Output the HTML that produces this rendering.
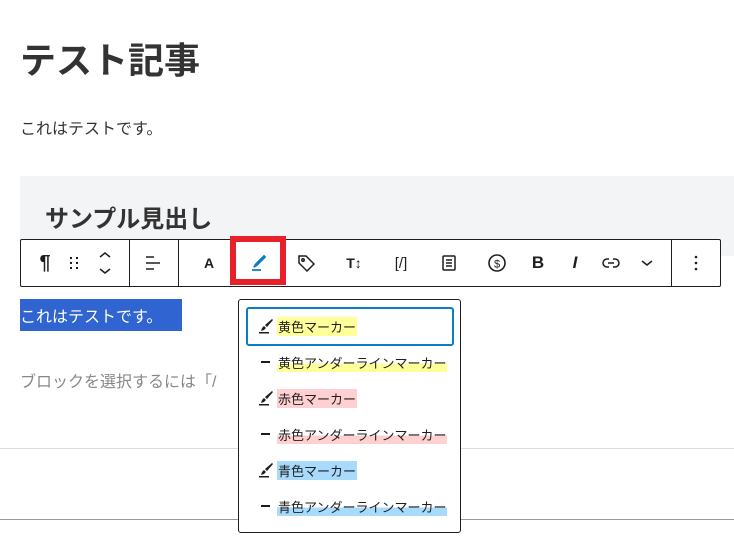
<!DOCTYPE html>
<html><head><meta charset="utf-8"><style>
*{margin:0;padding:0;box-sizing:border-box}
body{width:734px;height:545px;overflow:hidden;background:#fff;position:relative;font-family:"Liberation Sans","Noto Sans CJK JP",sans-serif;color:#1e1e1e}
.a{position:absolute;white-space:nowrap}
.ic{position:absolute;top:239px;height:48px;display:flex;align-items:center;justify-content:center;transform:translateX(-50%)}
.it{position:absolute;left:7px;width:208px;height:36px;display:flex;align-items:center;font-size:13px;color:#1e1e1e}
.it .m{position:absolute;left:12px;top:10px}
.it .t{position:absolute;left:31px;padding:0 1px}
.d{position:absolute;left:15px;top:17px;width:9px;height:2px;background:#1e1e1e}
</style></head><body>
<div class="a" style="left:20px;top:32px;font-size:36px;font-weight:bold;color:#333">テスト記事</div>
<div class="a" style="left:20px;top:115px;font-size:16px;color:#333">これはテストです。</div>
<div class="a" style="left:20px;top:176px;width:714px;height:80px;background:#f3f4f5"></div>
<div class="a" style="left:45px;top:199px;font-size:24px;font-weight:bold;color:#333">サンプル見出し</div>
<div class="a" style="left:20px;top:239px;width:701px;height:48px;border:1px solid #1e1e1e;background:#fff;border-radius:2px"></div>
<div class="a" style="left:129px;top:240px;width:1px;height:46px;background:#1e1e1e"></div>
<div class="a" style="left:178px;top:240px;width:1px;height:46px;background:#1e1e1e"></div>
<div class="a" style="left:671px;top:240px;width:1px;height:46px;background:#1e1e1e"></div>
<div class="ic" style="left:45px;font-size:20px;font-weight:bold">¶</div>
<div class="ic" style="left:74px"><svg width="12" height="16"><g fill="#1e1e1e"><rect x="2" y="2" width="2" height="2"/><rect x="8" y="2" width="2" height="2"/><rect x="2" y="7" width="2" height="2"/><rect x="8" y="7" width="2" height="2"/><rect x="2" y="12" width="2" height="2"/><rect x="8" y="12" width="2" height="2"/></g></svg></div>
<div class="ic" style="left:105px"><svg width="14" height="28" fill="none" stroke="#1e1e1e" stroke-width="1.5"><path d="M2 8l5-4 5 4M2 20l5 4 5-4"/></svg></div>
<div class="ic" style="left:153px"><svg width="18" height="18" stroke="#1e1e1e" stroke-width="1.5"><path d="M2 3h8M2 9h14M2 15h8"/></svg></div>
<div class="ic" style="left:209px;font-size:14px;font-weight:bold">A</div>
<div class="a" style="left:230px;top:236px;width:56px;height:49px;border:6px solid #e8202a"></div>
<div class="ic" style="left:258px"><svg width="20" height="20" fill="none" stroke="#0a7ec2" stroke-width="1.8"><path d="M16 3l-8 8-2 3 3-2 8-8zM4 17h9"/></svg></div>
<div class="ic" style="left:306px"><svg width="20" height="20" fill="none" stroke="#1e1e1e" stroke-width="1.5"><path d="M3 3h7l8 8-7 7-8-8z"/><circle cx="7" cy="7" r="1.2"/></svg></div>
<div class="ic" style="left:354px;font-size:14px;font-weight:bold">T↕</div>
<div class="ic" style="left:401px;font-size:15px">[/]</div>
<div class="ic" style="left:449px"><svg width="18" height="18" fill="none" stroke="#1e1e1e" stroke-width="1.5"><rect x="3" y="2" width="12" height="14" rx="1"/><path d="M6 6h6M6 9h6M6 12h6"/></svg></div>
<div class="ic" style="left:497px"><svg width="20" height="20" fill="none" stroke="#1e1e1e" stroke-width="1.6"><circle cx="10" cy="10" r="8"/><text x="10" y="14.5" font-size="11" text-anchor="middle" fill="#1e1e1e" stroke="none" font-family="Liberation Sans">$</text></svg></div>
<div class="ic" style="left:538px;font-size:17px;font-weight:bold">B</div>
<div class="ic" style="left:575px;font-size:17px;font-style:italic;font-weight:bold">I</div>
<div class="ic" style="left:611px"><svg width="20" height="14" fill="none" stroke="#1e1e1e" stroke-width="1.5"><path d="M8 3H6a4 4 0 000 8h2M12 3h2a4 4 0 010 8h-2M7 7h6"/></svg></div>
<div class="ic" style="left:647px"><svg width="14" height="10" fill="none" stroke="#1e1e1e" stroke-width="1.5"><path d="M2 3l5 4 5-4"/></svg></div>
<div class="ic" style="left:696px"><svg width="4" height="18" fill="#1e1e1e"><circle cx="2" cy="3" r="1.3"/><circle cx="2" cy="9" r="1.3"/><circle cx="2" cy="15" r="1.3"/></svg></div>
<div class="a" style="left:20px;top:299px;width:162px;height:32px;background:#3064d0"></div>
<div class="a" style="left:20px;top:303px;font-size:16px;color:#fff">これはテストです。</div>
<div class="a" style="left:20px;top:368px;font-size:16px;color:#888">ブロックを選択するには「/</div>
<div class="a" style="left:0;top:448px;width:734px;height:1px;background:#ddd"></div>
<div class="a" style="left:0;top:519px;width:734px;height:1px;background:#999"></div>
<div class="a" style="left:238px;top:299px;width:223px;height:234px;background:#fff;border:1px solid #1e1e1e;border-radius:3px">
 <div class="a" style="left:7px;top:7px;width:208px;height:39px;border:2px solid #0a7ec2;border-radius:3px"></div>
 <div class="it" style="top:8px"><svg class="m" width="16" height="16" fill="#1e1e1e"><path d="M14 1l1 1-6 7-2-2z M6 8l2 2-2 2-3 1 1-3z"/><rect x="1" y="14" width="10" height="1.5"/></svg><span class="t" style="background:#ffff99">黄色マーカー</span></div>
 <div class="it" style="top:44px"><span class="d"></span><span class="t" style="background:linear-gradient(transparent 55%,#ffff99 55%)">黄色アンダーラインマーカー</span></div>
 <div class="it" style="top:80px"><svg class="m" width="16" height="16" fill="#1e1e1e"><path d="M14 1l1 1-6 7-2-2z M6 8l2 2-2 2-3 1 1-3z"/><rect x="1" y="14" width="10" height="1.5"/></svg><span class="t" style="background:#ffd0d1">赤色マーカー</span></div>
 <div class="it" style="top:116px"><span class="d"></span><span class="t" style="background:linear-gradient(transparent 55%,#ffd0d1 55%)">赤色アンダーラインマーカー</span></div>
 <div class="it" style="top:152px"><svg class="m" width="16" height="16" fill="#1e1e1e"><path d="M14 1l1 1-6 7-2-2z M6 8l2 2-2 2-3 1 1-3z"/><rect x="1" y="14" width="10" height="1.5"/></svg><span class="t" style="background:#a8dafb">青色マーカー</span></div>
 <div class="it" style="top:188px"><span class="d"></span><span class="t" style="background:linear-gradient(transparent 55%,#a8dafb 55%)">青色アンダーラインマーカー</span></div>
</div>
</body></html>
